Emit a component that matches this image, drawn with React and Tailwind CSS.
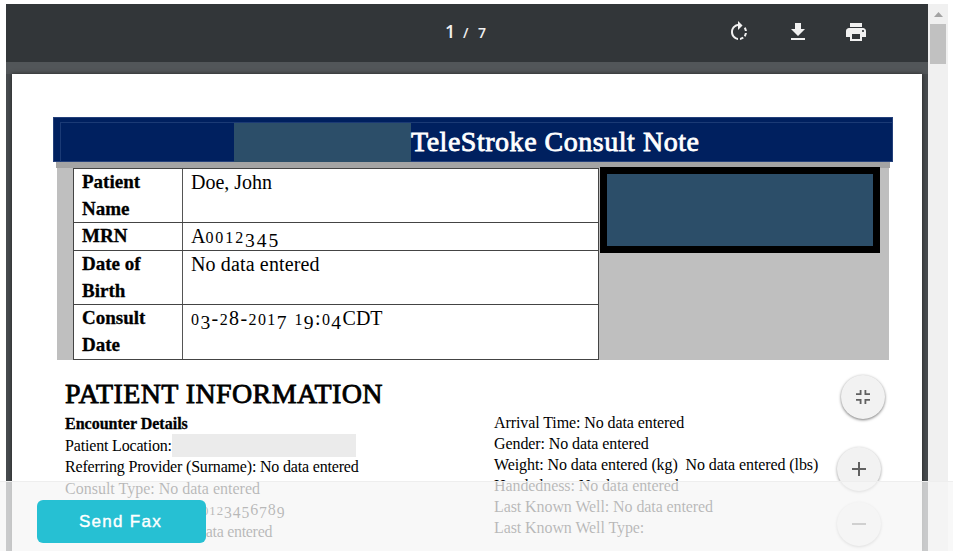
import React from "react";

// Old-style figures: 0-2 sit at x-height, 3-5, 7 and 9 descend, 6 and 8 ascend.
function Figures({ children }) {
  return [...children].map((ch, i) => {
    if ("012".includes(ch)) return <span key={i} className="text-[0.8em]">{ch}</span>;
    if ("34579".includes(ch)) return <span key={i} className="relative top-[0.2em] text-[0.98em]">{ch}</span>;
    return <React.Fragment key={i}>{ch}</React.Fragment>;
  });
}

function Row({ label, value, height }) {
  return (
    <div className={`flex border-b border-[#444] bg-white ${height}`}>
      <div className="w-[109px] shrink-0 border-r border-[#555] pl-2 pr-6 text-[19px] leading-[26.8px] font-bold [-webkit-text-stroke:0.3px_black]">{label}</div>
      <div className="pl-2 leading-[27px] whitespace-nowrap">{value}</div>
    </div>
  );
}

const line = "block w-fit whitespace-nowrap";

export default function App() {
  return (
    <div className="relative h-[553px] w-[953px] overflow-hidden bg-white font-['Liberation_Serif',serif] text-black">
      <div className="flex h-[551px] pt-1 pl-[6px]">
        <div className="flex h-[547px] w-[922px] flex-col overflow-hidden bg-[#474b4e]">
          <header className="flex h-[58px] shrink-0 items-center bg-[#323639] pb-[2px] font-['Open_Sans',sans-serif] text-[#f1f1f1]">
            <div className="-mt-[2px] ml-[439px] flex w-[282px] items-baseline text-[15px] font-semibold">
              <span className="w-[18px] text-lg leading-6">1</span>
              <span className="w-[15px] text-sm">/</span>
              <span className="text-sm">7</span>
            </div>
            <div className="flex gap-[34.5px]">
              <svg className="size-6" viewBox="0 0 24 24" fill="#f1f1f1"><path d="M15.55 5.55L11 1v3.07C7.06 4.56 4 7.92 4 12s3.05 7.44 7 7.93v-2.02c-2.84-.48-5-2.94-5-5.91s2.16-5.43 5-5.91V10l4.55-4.45zM19.93 11c-.17-1.39-.72-2.73-1.62-3.89l-1.42 1.42c.54.75.88 1.6 1.02 2.47h2.02zM13 17.9v2.02c1.39-.17 2.74-.71 3.9-1.61l-1.44-1.44c-.75.54-1.59.89-2.46 1.03zm3.89-2.42l1.42 1.41c.9-1.16 1.45-2.5 1.62-3.89h-2.02c-.14.87-.48 1.72-1.02 2.48z" /></svg>
              <svg className="size-6" viewBox="0 0 24 24" fill="#f1f1f1"><path d="M19 9h-4V3H9v6H5l7 7 7-7zM5 18v2h14v-2H5z" /></svg>
              <svg className="size-6" viewBox="0 0 24 24" fill="#f1f1f1"><path d="M19 8H5c-1.66 0-3 1.34-3 3v6h4v4h12v-4h4v-6c0-1.66-1.34-3-3-3zm-3 11H8v-5h8v5zm3-7c-.55 0-1-.45-1-1s.45-1 1-1 1 .45 1 1-.45 1-1 1zm-1-9H6v4h12V3z" /></svg>
            </div>
          </header>
          <div className="h-3 shrink-0 bg-[#525659]" />
          <main className="ml-[6px] w-[910px] flex-1 bg-white shadow-[0_0_4px_#222]">
            <section className="ml-[41px] mt-[43px] w-[840px]">
              <h1 className="flex h-[45px] flex-col border border-[#24407a] bg-[#00205f] text-white">
                <span className="ml-[6px] mt-1 flex h-[40px] border-t border-l border-[#1b3a75]">
                  <span className="ml-[173px] h-[39px] w-[177px] bg-[#2c4e69]" />
                  <span className="whitespace-nowrap text-[28px] leading-[37px] tracking-[0.52px] [-webkit-text-stroke:0.8px_white]">TeleStroke Consult Note</span>
                </span>
              </h1>
              <div className="ml-[3px] h-[6px] w-[834px] bg-[#a4a4a4]" />
              <div className="ml-1 flex h-[192px] w-[832px] bg-[#bfbfbf] pl-4">
                <div className="w-[526px] border-t border-l border-r border-[#444] text-xl">
                  <Row height="h-[54px]" label="Patient Name" value="Doe, John" />
                  <Row height="h-[28px]" label="MRN" value={<>A<span className="tracking-[1.9px]"><Figures>0012345</Figures></span></>} />
                  <Row height="h-[54px]" label="Date of Birth" value={<span className="tracking-[0.14px]">No data entered</span>} />
                  <Row height="h-[55px]" label="Consult Date" value={<><span className="tracking-[1.4px]"><Figures>03-28-2017 19:04</Figures></span>CDT</>} />
                </div>
                <div className="-mt-[1px] ml-[1px] h-[86px] w-[280px] border-[7px] border-black bg-[#2c4e69]" />
              </div>
            </section>
            <section className="ml-[53px] mt-[18px]">
              <h2 className="w-fit whitespace-nowrap text-[28px] leading-[32px] tracking-[0.4px] [-webkit-text-stroke:0.8px_black]">PATIENT INFORMATION</h2>
              <div className="mt-[3px] flex text-base leading-[21.5px]">
                <div className="w-[429px]">
                  <b className={`${line} [-webkit-text-stroke:0.3px_black]`}>Encounter Details</b>
                  <div className="flex"><span className={`${line} tracking-[-0.17px]`}>Patient Location:</span><span className="-mt-[1px] -mb-[1px] h-[23px] w-[184px] bg-[#ebebeb]" /></div>
                  <span className={`${line} tracking-[-0.18px]`}>Referring Provider (Surname): No data entered</span>
                  <span className={line}>Consult Type: No data entered</span>
                  <span className={`${line} ml-[137px] h-[21.5px] tracking-[0.9px]`}><Figures>0123456789</Figures></span>
                  <span className={`${line} ml-[133px] tracking-[-0.3px]`}>data entered</span>
                </div>
                <div className="-mt-[1px] leading-[21.1px] tracking-[-0.09px]">
                  <span className={line}>Arrival Time: No data entered</span>
                  <span className={line}>Gender: No data entered</span>
                  <span className={`${line} whitespace-pre`}>Weight: No data entered (kg)  No data entered (lbs)</span>
                  <span className={line}>Handedness: No data entered</span>
                  <span className={line}>Last Known Well: No data entered</span>
                  <span className={line}>Last Known Well Type:</span>
                </div>
              </div>
            </section>
          </main>
        </div>
        <div className="flex h-[547px] w-5 flex-col items-center bg-[#f0f0f0]">
          <svg className="mt-2 h-[5px] w-[9px]" viewBox="0 0 9 5" fill="#a3a3a3"><path d="M0 5L4.5 0L9 5z" /></svg>
          <div className="mt-[7px] h-10 w-4 bg-[#c1c1c1]" />
        </div>
      </div>

      <div className="absolute top-[375px] left-[841px] flex size-11 items-center justify-center rounded-full bg-[#f2f2f2] shadow-[0_1px_3px_#0008]">
        <svg className="size-[14px]" viewBox="0 0 14 14" fill="none" stroke="#616161" strokeWidth="1.8"><path d="M0 4.1h4.6V0M9.4 0v4.1H14M0 9.9h4.6V14M9.4 14V9.9H14" /></svg>
      </div>
      <div className="absolute top-[447px] left-[837px] flex size-11 items-center justify-center rounded-full bg-[#f2f2f2] shadow-[0_1px_3px_#0006]">
        <svg className="size-[14px]" viewBox="0 0 14 14" fill="none" stroke="#616161" strokeWidth="2"><path d="M0 7h14M7 0v14" /></svg>
      </div>
      <div className="absolute top-[502px] left-[837px] flex size-11 items-center justify-center rounded-full bg-[#f2f2f2] shadow-[0_1px_3px_#0006]">
        <svg className="size-[14px]" viewBox="0 0 14 14" fill="none" stroke="#616161" strokeWidth="2"><path d="M0 7h14" /></svg>
      </div>
      <footer className="absolute top-[481px] left-0 h-[70px] w-full border-t border-[#eee] bg-[#f6f6f6]/75 pt-[18px] pl-[37px]">
        <button className="block h-[43px] w-[169px] rounded-[6px] bg-[#26c0d3] pr-[2px] font-['Liberation_Sans',sans-serif] text-[17px] tracking-[1.3px] text-white [-webkit-text-stroke:0.4px_white]">Send Fax</button>
      </footer>
    </div>
  );
}
